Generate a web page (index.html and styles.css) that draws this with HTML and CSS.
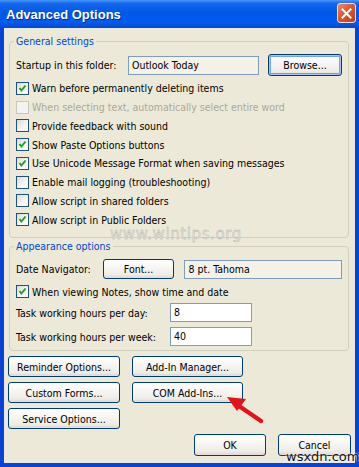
FILE: index.html
```html
<!DOCTYPE html>
<html>
<head>
<title>Advanced Options</title>
<link rel="stylesheet" href="styles.css">
</head>
<body>
<div class="window">
	<div class="titlebar">
		<span class="title">Advanced Options</span>
		<span class="close"><svg width="11" height="11" viewBox="0 0 11 11"><path d="M1.5 1.5 L9.5 9.5 M9.5 1.5 L1.5 9.5" stroke="#fff" stroke-width="2" stroke-linecap="square"/></svg></span>
	</div>
	<div class="client">
		<fieldset class="group general">
			<legend>General settings</legend>
			<div class="row startup">
				<span class="label">Startup in this folder:</span>
				<div class="field readonly">Outlook Today</div>
				<button class="btn default browse">Browse...</button>
			</div>
			<div class="check on"><span class="box"></span>Warn before permanently deleting items</div>
			<div class="check disabled"><span class="box"></span>When selecting text, automatically select entire word</div>
			<div class="check"><span class="box"></span>Provide feedback with sound</div>
			<div class="check on"><span class="box"></span>Show Paste Options buttons</div>
			<div class="check on"><span class="box"></span>Use Unicode Message Format when saving messages</div>
			<div class="check"><span class="box"></span>Enable mail logging (troubleshooting)</div>
			<div class="check"><span class="box"></span>Allow script in shared folders</div>
			<div class="check on"><span class="box"></span>Allow script in Public Folders</div>
		</fieldset>
		<fieldset class="group appearance">
			<legend>Appearance options</legend>
			<div class="row datenav">
				<span class="label">Date Navigator:</span>
				<button class="btn font">Font...</button>
				<div class="field readonly fontname">8 pt. Tahoma</div>
			</div>
			<div class="check on notes"><span class="box"></span>When viewing Notes, show time and date</div>
			<div class="row task day">
				<span class="label">Task working hours per day:</span>
				<div class="field hours">8</div>
			</div>
			<div class="row task week">
				<span class="label">Task working hours per week:</span>
				<div class="field hours">40</div>
			</div>
		</fieldset>
		<div class="buttons">
			<button class="btn">Reminder Options...</button>
			<button class="btn">Add-In Manager...</button>
			<button class="btn">Custom Forms...</button>
			<button class="btn">COM Add-Ins...</button>
			<button class="btn">Service Options...</button>
		</div>
		<div class="actions">
			<button class="btn ok">OK</button>
			<button class="btn cancel">Cancel</button>
		</div>
	</div>
	<div class="watermark">www.wintips.org</div>
	<svg class="arrow" width="50" height="40" viewBox="0 0 50 40">
		<path d="M37 32 L15 17" stroke="#e3121b" stroke-width="4.5" stroke-linecap="round"/>
		<path d="M3 8 L22 10 L13 22 Z" fill="#e3121b"/>
	</svg>
	<div class="credit">wsxdn.com</div>
</div>
</body>
</html>
```
FILE: styles.css
```css
html,body{
	margin:0;
	padding:0;
	background:#fff;
}
.window{
	position:relative;
	width:359px;
	height:467px;
	display:flex;
	flex-direction:column;
	background:#0842d6;
	font-family:"DejaVu Sans Condensed","DejaVu Sans",sans-serif;
	font-size:10.5px;
	color:#000;
}
.titlebar{
	height:28px;
	flex:none;
	display:flex;
	align-items:center;
	justify-content:space-between;
	padding:0 3px 0 6px;
	background:linear-gradient(#4a97fa 0,#1468ec 12%,#0058e8 45%,#005cef 80%,#0349d4 100%);
}
.title{
	color:#fff;
	font-family:"Liberation Sans",Arial,sans-serif;
	font-weight:bold;
	font-size:13px;
	text-shadow:1px 1px 0 #0a2c8a;
	margin-top:1px;
}
.close{
	width:17px;
	height:18px;
	border:1px solid #f2e2dc;
	border-radius:3px;
	background:linear-gradient(135deg,#ec8a6e 0,#dc5830 45%,#c63c15 100%);
	display:flex;
	align-items:center;
	justify-content:center;
	margin-top:-2px;
}
.client{
	flex:1;
	margin:0 4px 4px 4px;
	padding:7px 6px 0 5px;
	background:#ece9d8;
	display:flex;
	flex-direction:column;
}
.group{
	margin:0;
	padding:6px 6px 8px 6px;
	border:1px solid #d0d0bf;
	border-radius:4px;
	min-width:0;
}
.group legend{
	color:#0046d5;
	padding:0 2px;
	margin-left:-2px;
	line-height:13px;
}
.appearance{
	margin-top:2px;
	padding-bottom:4px;
}
.row{
	display:flex;
	align-items:center;
}
.startup{
	height:22px;
}
.startup .label{
	width:112px;
}
.field{
	box-sizing:border-box;
	height:19px;
	line-height:17px;
	border:1px solid #7f9db9;
	background:#fff;
	padding:0 3px;
}
.field.readonly{
	background:#f3f1e8;
}
.startup .field{
	width:131px;
}
.browse{
	width:74px;
	height:22px;
	margin-left:9px;
}
.check{
	display:flex;
	align-items:center;
	height:18.75px;
}
.startup + .check{
	margin-top:3px;
}
.box{
	box-sizing:border-box;
	width:13px;
	height:13px;
	border:1px solid #1c5180;
	background:linear-gradient(135deg,#dcdcd5 0,#f5f5f2 60%,#fff 100%);
	margin-right:3px;
	flex:none;
}
.check.on .box{
	background-image:url("data:image/svg+xml;utf8,<svg xmlns='http://www.w3.org/2000/svg' width='11' height='11'><path d='M2.5 5 L4.5 7.5 L8.5 2.5' fill='none' stroke='%2321a121' stroke-width='2'/></svg>"),linear-gradient(135deg,#dcdcd5 0,#f5f5f2 60%,#fff 100%);
}
.check.disabled{
	color:#aca899;
}
.check.disabled .box{
	border-color:#cac8bb;
	background:#f4f3ee;
}
.datenav{
	height:20px;
}
.datenav .label{
	width:87px;
}
.font{
	width:72px;
	height:20px;
}
.fontname{
	width:158px;
	margin-left:10px;
}
.notes{
	height:19px;
	margin-top:3px;
}
.task .label{
	width:154px;
}
.task .field{
	width:82px;
}
.day{
	margin-top:2px;
}
.week{
	margin-top:5px;
}
.btn{
	box-sizing:border-box;
	font-family:inherit;
	font-size:10.5px;
	color:#000;
	padding:0;
	border:1px solid #003c74;
	border-radius:3px;
	background:linear-gradient(#fff 0,#f7f6f2 40%,#ecebe6 85%,#d6d0c5 100%);
	box-shadow:inset 0 -1px 0 #e3e1d7;
}
.btn.default{
	box-shadow:inset 0 0 0 1px #a9c3f1,inset 0 0 0 2px #7aa0ea;
}
.buttons{
	display:grid;
	grid-template-columns:112px 111px;
	column-gap:12px;
	row-gap:5px;
	margin:5px 0 0 -1px;
}
.buttons .btn{
	height:21px;
}
.actions{
	display:flex;
	justify-content:flex-end;
	gap:12px;
	margin:5px -2px 0 0;
}
.actions .btn{
	height:22px;
}
.ok{
	width:72px;
}
.cancel{
	width:73px;
}
.watermark{
	position:absolute;
	left:110px;
	top:225px;
	font-family:"DejaVu Sans",sans-serif;
	font-size:15px;
	letter-spacing:0.6px;
	color:#e4e2d8;
	-webkit-text-stroke:0.3px #a8a8a3;
}
.arrow{
	position:absolute;
	left:224px;
	top:389px;
}
.credit{
	position:absolute;
	left:286px;
	top:449px;
	font-family:"DejaVu Sans",sans-serif;
	font-size:13px;
	color:#111;
	text-shadow:0 0 2px #fff,0 0 2px #fff;
}
```
